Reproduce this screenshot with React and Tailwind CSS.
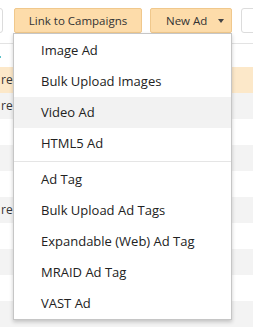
const MENU_GROUPS = [
  ['Image Ad', 'Bulk Upload Images', 'Video Ad', 'HTML5 Ad'],
  ['Ad Tag', 'Bulk Upload Ad Tags', 'Expandable (Web) Ad Tag', 'MRAID Ad Tag', 'VAST Ad'],
];

// band colour + clipped cell text, top to bottom
const ROWS = [
  { bg: 'bg-[#fce8c9]', text: 're' },
  { bg: 'bg-[#f3f3f3]', text: 're' },
  { bg: 'bg-white', text: '' },
  { bg: 'bg-[#f3f3f3]', text: '' },
  { bg: 'bg-white', text: '' },
  { bg: 'bg-[#f3f3f3]', text: 're' },
  { bg: 'bg-white', text: '' },
  { bg: 'bg-[#f3f3f3]', text: '' },
  { bg: 'bg-white', text: '' },
  { bg: 'bg-[#f3f3f3]', text: '' },
];

export default function App() {
  return (
    <div className="relative w-[253px] h-[333px] overflow-hidden bg-white font-['Open_Sans',sans-serif]">
      {/* Toolbar */}
      <div className="flex items-start pt-[8px]">
        <div className="-ml-[20px] w-[23px] h-[25px] shrink-0 rounded-[3px] border border-[#dcdcdc] bg-white" />
        <button className="ml-[11px] w-[128px] h-[25px] shrink-0 rounded-[2px] border border-[#f0c88c] bg-[#fddcaa] text-[11.5px] text-[#333] flex items-center justify-center">
          Link to Campaigns
        </button>
        <button className="ml-[8px] w-[82px] h-[25px] shrink-0 rounded-[2px] border border-[#f0c88c] bg-[#fddcaa] text-[11.5px] text-[#333] flex items-center pl-[15px]">
          <span>New Ad</span>
          <span className="ml-[11px] w-0 h-0 border-l-[3.5px] border-r-[3.5px] border-t-[4px] border-l-transparent border-r-transparent border-t-[#444]" />
        </button>
        <div className="ml-[9px] w-[40px] h-[25px] shrink-0 rounded-[3px] border border-[#dcdcdc] bg-white" />
      </div>

      {/* Table */}
      <div className="h-[11px] border-b border-[#e3e3e3]" />
      <div className="h-[23px] flex items-end pb-[9px]">
        <span className="w-[1px] h-[2px] bg-[#5bc0c8]" />
      </div>
      {ROWS.map((row, i) => (
        <div key={i} className={`h-[26px] flex items-center pl-[1px] text-[12px] text-[#333] ${row.bg}`}>
          {row.text}
        </div>
      ))}

      {/* New Ad menu */}
      <div className="absolute left-[13px] top-[33px] w-[219px] bg-white border border-[#c6c6c6] shadow-[0_2px_4px_rgba(0,0,0,0.2)] pt-[1px]">
        {MENU_GROUPS.map((group, gi) => (
          <div key={gi}>
            {gi > 0 && <div className="my-[2px] h-px bg-[#e5e5e5]" />}
            {group.map((label) => (
              <div
                key={label}
                className={`h-[31px] flex items-center pl-[27px] text-[13px] text-[#222] ${label === 'Video Ad' ? 'bg-[#f2f2f2]' : ''}`}
              >
                {label}
              </div>
            ))}
          </div>
        ))}
      </div>
    </div>
  );
}
